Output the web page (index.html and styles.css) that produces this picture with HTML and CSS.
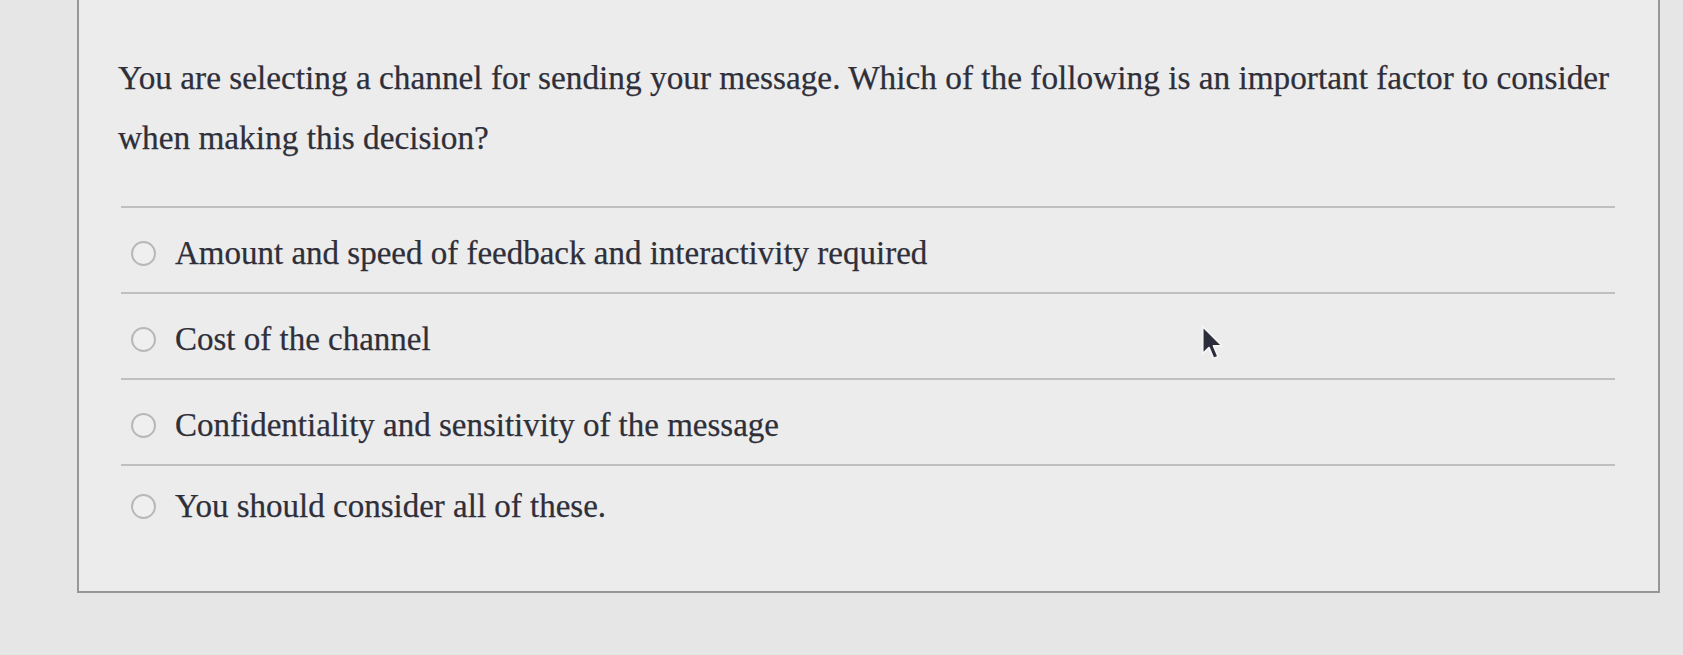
FILE: index.html
```html
<!DOCTYPE html>
<html lang="en">
<head>
<meta charset="utf-8">
<title>Question</title>
<link rel="stylesheet" href="styles.css">
</head>
<body>
<div class="page">
  <div class="card">
    <p class="question">You are selecting a channel for sending your message. Which of the following is an important factor to consider when making this decision?</p>
    <ul class="options">
      <li class="option"><span class="radio"></span><span class="label">Amount and speed of feedback and interactivity required</span></li>
      <li class="option"><span class="radio"></span><span class="label">Cost of the channel</span></li>
      <li class="option"><span class="radio"></span><span class="label">Confidentiality and sensitivity of the message</span></li>
      <li class="option option-last"><span class="radio"></span><span class="label">You should consider all of these.</span></li>
    </ul>
  </div>
  <svg class="cursor" width="26" height="38" viewBox="0 0 22 33" aria-hidden="true">
    <path d="M2 2 L2 26 L7.5 20.5 L11.5 30 L15.5 28.3 L11.5 19 L19 19 Z" fill="#2c2d3a" stroke="#f4f4f4" stroke-width="1.6" stroke-linejoin="round"/>
  </svg>
</div>
</body>
</html>
```
FILE: styles.css
```css
html, body {
  margin: 0;
  padding: 0;
}
body {
  background: #e5e6e5;
  font-family: "Liberation Serif", "Times New Roman", serif;
  color: #2f2f3a;
}
.page {
  position: relative;
  width: 1683px;
  height: 655px;
  padding: 0 23px 0 77px;
  box-sizing: border-box;
  overflow: hidden;
}
.card {
  height: 593px;
  box-sizing: border-box;
  background: #ebeceb;
  border: 2px solid #96969b;
  border-top: none;
  padding: 48px 43px 0 39px;
}
.question {
  margin: 0 -40px 38px 0;
  font-size: 33.3px;
  line-height: 60px;
  -webkit-text-stroke: 0.25px #2f2f3a;
}
.options {
  list-style: none;
  margin: 0 0 0 3px;
  padding: 0;
}
.option {
  display: flex;
  align-items: center;
  border-top: 2px solid #c0c0c3;
  padding: 26px 0 20px 10px;
  font-size: 33px;
  line-height: 38px;
  -webkit-text-stroke: 0.25px #2f2f3a;
}
.option-last {
  padding-top: 21px;
}
.radio {
  flex: none;
  width: 21px;
  height: 21px;
  border: 2px solid #b8b8ba;
  border-radius: 50%;
  background: #efefef;
  margin-right: 19px;
}
.cursor {
  position: absolute;
  left: 1200px;
  top: 324px;
}
```
